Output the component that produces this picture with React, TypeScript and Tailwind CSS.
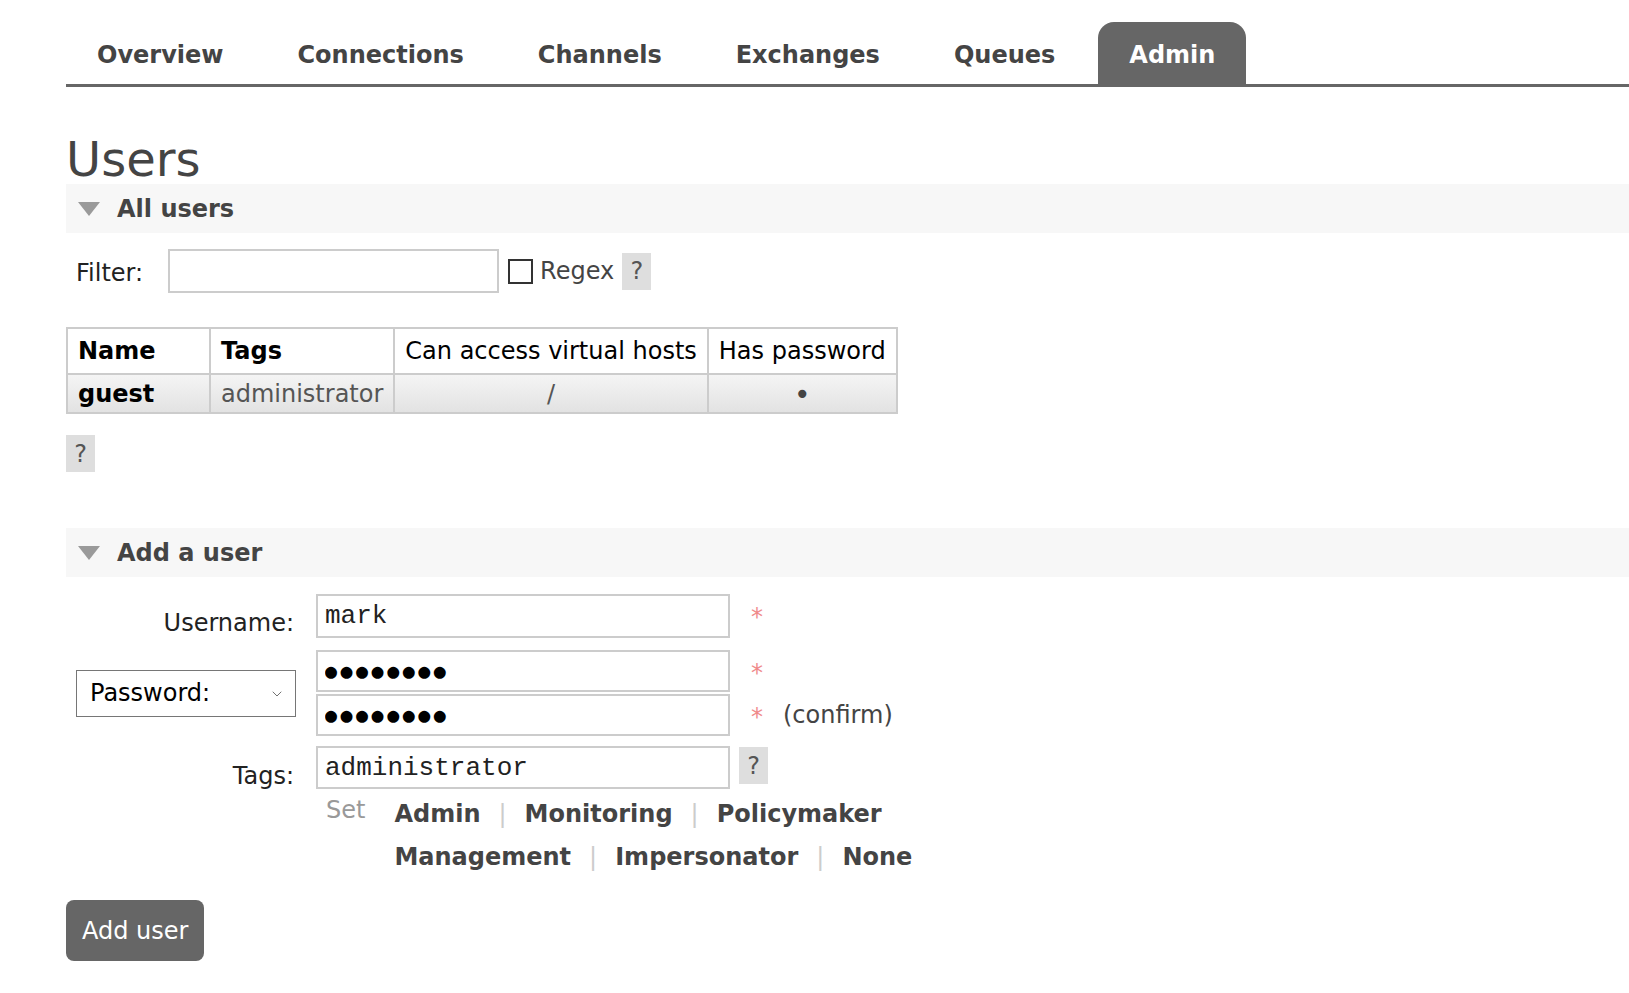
import { ChevronDown } from "lucide-react";

const tabs = ["Overview", "Connections", "Channels", "Exchanges", "Queues", "Admin"];

function Triangle() {
  return (
    <svg width="22" height="14" viewBox="0 0 22 14" className="flex-shrink-0">
      <polygon points="0,0 22,0 11,14" fill="#9a9a9a" />
    </svg>
  );
}

function SectionBar({ title }: { title: string }) {
  return (
    <div className="h-[49px] bg-[#f7f7f7] flex items-center">
      <div className="ml-[12px]">
        <Triangle />
      </div>
      <span className="ml-[17px] text-[24px] font-bold text-[#444]">{title}</span>
    </div>
  );
}

function Help({ className = "" }: { className?: string }) {
  return (
    <span
      className={
        "w-[29px] h-[37px] bg-[#dedede] text-[#555] text-[24px] leading-none flex items-center justify-center flex-shrink-0 " +
        className
      }
    >
      ?
    </span>
  );
}

function Star() {
  return (
    <span className="self-start mt-[11px] ml-[21px] text-[24px] leading-none text-[#ef8a8a]">*</span>
  );
}

const inputCls =
  "w-[414px] border-2 border-[#cccccc] bg-white px-[7px] text-[26px] text-[#222] font-['Liberation_Mono',monospace] outline-none";

const pwCls =
  "w-[414px] h-[42px] border-2 border-[#cccccc] bg-white px-[7px] text-[20px] text-black font-['DejaVu_Sans_Mono',monospace] tracking-[3.5px] outline-none";

export default function App() {
  return (
    <div className="min-h-screen bg-white pl-[66px] pt-[22px] pb-[30px] font-['DejaVu_Sans',Verdana,sans-serif] text-[24px] text-[#333]">
      {/* Menu */}
      <nav className="flex border-b-[3px] border-[#666]">
        {tabs.map((t) => (
          <a
            key={t}
            className={
              t === "Admin"
                ? "h-[62px] px-[31px] pt-[3px] mr-[12px] flex items-center font-bold text-white bg-[#666] rounded-t-[16px]"
                : "h-[62px] px-[31px] pt-[3px] mr-[12px] flex items-center font-bold text-[#444]"
            }
          >
            {t}
          </a>
        ))}
      </nav>

      <h1 className="mt-[48px] mb-[1px] text-[48px] leading-none font-normal text-[#444]">Users</h1>

      <SectionBar title="All users" />

      {/* Filter */}
      <div className="mt-[16px] flex items-center h-[44px]">
        <span className="ml-[10px] pt-[4px] text-[#222]">Filter:</span>
        <input className="ml-[25px] w-[331px] h-[44px] border-2 border-[#cccccc] bg-white outline-none" />
        <span className="ml-[9px] w-[25px] h-[25px] border-2 border-[#333] bg-white flex-shrink-0" />
        <span className="ml-[7px] text-[#444]">Regex</span>
        <Help className="ml-[8px]" />
      </div>

      {/* Users table */}
      <table className="mt-[34px] border-collapse border-2 border-[#cccccc] whitespace-nowrap">
        <thead>
          <tr className="bg-white">
            <th className="w-[143px] h-[46px] px-[10px] text-left font-bold text-black border-2 border-[#cccccc]">Name</th>
            <th className="px-[10px] text-left font-bold text-black border-2 border-[#cccccc]">Tags</th>
            <th className="px-[10px] text-left font-normal text-black border-2 border-[#cccccc]">
              Can access virtual hosts
            </th>
            <th className="px-[10px] text-left font-normal text-black border-2 border-[#cccccc]">
              Has password
            </th>
          </tr>
        </thead>
        <tbody>
          <tr className="bg-linear-to-b from-[#f5f5f5] to-[#e2e2e2]">
            <td className="h-[39px] px-[10px] font-bold text-black border-2 border-[#cccccc]">guest</td>
            <td className="px-[10px] text-[#555] border-2 border-[#cccccc]">administrator</td>
            <td className="px-[10px] text-center text-[#555] border-2 border-[#cccccc]">/</td>
            <td className="px-[10px] pt-[3px] text-center text-[28px] leading-none text-[#444] border-2 border-[#cccccc]">•</td>
          </tr>
        </tbody>
      </table>

      <Help className="mt-[21px]" />

      <div className="mt-[56px]">
        <SectionBar title="Add a user" />
      </div>

      {/* Add user form */}
      <div className="mt-[17px] flex items-center">
        <label className="w-[228px] translate-y-[7px] text-right text-[#222]">Username:</label>
        <input className={inputCls + " ml-[22px] h-[44px]"} defaultValue="mark" />
        <Star />
      </div>

      <div className="mt-[12px] flex items-center">
        <div className="w-[230px]">
          <div className="relative ml-[10px] w-[220px] h-[47px]">
            <select className="appearance-none w-full h-full border border-[#767676] bg-white pl-[13px] text-[24px] text-black outline-none">
              <option>Password:</option>
              <option>Hashed password:</option>
              <option>No password</option>
            </select>
            <ChevronDown
              className="absolute right-[11px] top-[16px] w-[16px] h-[16px] text-[#555] pointer-events-none"
              strokeWidth={1.25}
            />
          </div>
        </div>
        <div className="ml-[20px] flex flex-col gap-[2px]">
          <div className="flex items-center">
            <input className={pwCls} readOnly value="●●●●●●●●" />
            <Star />
          </div>
          <div className="flex items-center">
            <input className={pwCls} readOnly value="●●●●●●●●" />
            <Star />
            <span className="ml-[20px] text-[#444]">(confirm)</span>
          </div>
        </div>
      </div>

      <div className="mt-[10px] flex items-center">
        <label className="w-[228px] translate-y-[8px] text-right text-[#222]">Tags:</label>
        <input className={inputCls + " ml-[22px] h-[43px]"} defaultValue="administrator" />
        <Help className="ml-[9px] self-start mt-[1px]" />
      </div>

      <div className="mt-[3px] flex">
        <span className="ml-[260px] leading-[36px] text-[#999]">Set</span>
        <div className="ml-[29px] flex flex-col font-bold text-[#444]">
          <div className="h-[43px] flex items-center gap-[18px]">
            <a>Admin</a>
            <span className="font-normal text-[#ccc]">|</span>
            <a>Monitoring</a>
            <span className="font-normal text-[#ccc]">|</span>
            <a>Policymaker</a>
          </div>
          <div className="h-[43px] flex items-center gap-[18px]">
            <a>Management</a>
            <span className="font-normal text-[#ccc]">|</span>
            <a>Impersonator</a>
            <span className="font-normal text-[#ccc]">|</span>
            <a>None</a>
          </div>
        </div>
      </div>

      <button className="mt-[22px] h-[61px] px-[16px] rounded-[8px] bg-[#666] text-white text-[24px]">
        Add user
      </button>
    </div>
  );
}
